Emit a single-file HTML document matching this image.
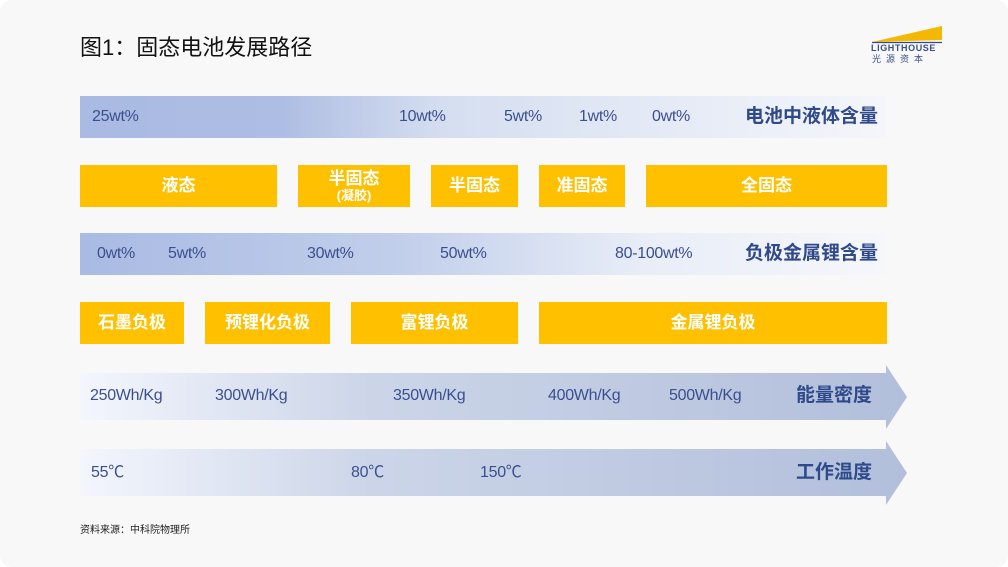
<!DOCTYPE html>
<html><head><meta charset="utf-8"><style>
body{margin:0;width:1008px;height:567px;background:#fff;font-family:"Liberation Sans","Noto Sans CJK SC",sans-serif;}
.page{position:absolute;left:0;top:0;width:1008px;height:567px;background:#f8f8f8;border-radius:12px;overflow:hidden}
.abs{position:absolute}
.t{position:absolute;color:#3b4f8f;font-size:16px;line-height:20px;letter-spacing:-0.3px}
.lab{position:absolute;color:#2f4a8a;font-size:19px;font-weight:bold;line-height:20px}
.y{position:absolute;background:#ffc000;color:#fff;font-weight:bold;font-size:17px;display:flex;align-items:center;justify-content:center;flex-direction:column;line-height:18px}
</style></head><body><div class="page">
<div class="abs" style="left:80px;top:30px;font-size:22px;color:#111;">图1：固态电池发展路径</div>
<svg class="abs" style="left:866px;top:22px" width="80" height="24">
<polygon points="6,20 76,4 76,18" fill="#f5b800"/>
<line x1="6" y1="20.5" x2="76" y2="20.5" stroke="#2f4a8a" stroke-width="1.2"/>
</svg>
<div class="abs" style="left:871px;top:43px;font-size:9px;font-weight:bold;color:#3b4f8f;letter-spacing:0.6px">LIGHTHOUSE</div>
<div class="abs" style="left:872px;top:52px;font-size:9px;color:#3b4f8f;letter-spacing:5px">光源资本</div>

<div class="abs" style="left:80px;top:96px;width:806px;height:42px;background:linear-gradient(90deg,#a9bae3 0%,#aebde3 25%,#d5def0 45%,#f4f6fb 100%)"></div>
<div class="t" style="left:92px;top:107px">25wt%</div>
<div class="t" style="left:399px;top:107px">10wt%</div>
<div class="t" style="left:504px;top:107px">5wt%</div>
<div class="t" style="left:579px;top:107px">1wt%</div>
<div class="t" style="left:652px;top:107px">0wt%</div>
<div class="lab" style="left:745px;top:107px">电池中液体含量</div>

<div class="y" style="left:80px;top:165px;width:197px;height:42px">液态</div>
<div class="y" style="left:298px;top:165px;width:112px;height:42px">半固态<span style="font-size:13px;line-height:15px">(凝胶)</span></div>
<div class="y" style="left:431px;top:165px;width:87px;height:42px">半固态</div>
<div class="y" style="left:539px;top:165px;width:86px;height:42px">准固态</div>
<div class="y" style="left:646px;top:165px;width:241px;height:42px">全固态</div>

<div class="abs" style="left:80px;top:233px;width:806px;height:42px;background:linear-gradient(90deg,#a9bae3 0%,#c2cfeb 40%,#e8edf7 70%,#f6f7fb 100%)"></div>
<div class="t" style="left:97px;top:244px">0wt%</div>
<div class="t" style="left:168px;top:244px">5wt%</div>
<div class="t" style="left:307px;top:244px">30wt%</div>
<div class="t" style="left:440px;top:244px">50wt%</div>
<div class="t" style="left:615px;top:244px">80-100wt%</div>
<div class="lab" style="left:745px;top:244px">负极金属锂含量</div>

<div class="y" style="left:80px;top:302px;width:104px;height:42px">石墨负极</div>
<div class="y" style="left:205px;top:302px;width:125px;height:42px">预锂化负极</div>
<div class="y" style="left:351px;top:302px;width:167px;height:42px">富锂负极</div>
<div class="y" style="left:539px;top:302px;width:348px;height:42px">金属锂负极</div>

<svg class="abs" style="left:80px;top:364px" width="830" height="142">
<defs><linearGradient id="g" x1="0" x2="1"><stop offset="0" stop-color="#f3f6fd"/><stop offset="0.35" stop-color="#ccd5e8"/><stop offset="1" stop-color="#b2bfdb"/></linearGradient></defs>
<polygon points="0,9 806,9 806,1 827,33 806,65 806,56 0,56" fill="url(#g)"/>
<polygon points="0,85 806,85 806,77 827,109 806,141 806,132 0,132" fill="url(#g)"/>
</svg>
<div class="t" style="left:90px;top:386px">250Wh/Kg</div>
<div class="t" style="left:215px;top:386px">300Wh/Kg</div>
<div class="t" style="left:393px;top:386px">350Wh/Kg</div>
<div class="t" style="left:548px;top:386px">400Wh/Kg</div>
<div class="t" style="left:669px;top:386px">500Wh/Kg</div>
<div class="lab" style="left:796px;top:386px">能量密度</div>
<div class="t" style="left:91px;top:463px">55℃</div>
<div class="t" style="left:351px;top:463px">80℃</div>
<div class="t" style="left:480px;top:463px">150℃</div>
<div class="lab" style="left:796px;top:463px">工作温度</div>

<div class="abs" style="left:80px;top:521px;font-size:10px;color:#222">资料来源：中科院物理所</div>
</div></body></html>
